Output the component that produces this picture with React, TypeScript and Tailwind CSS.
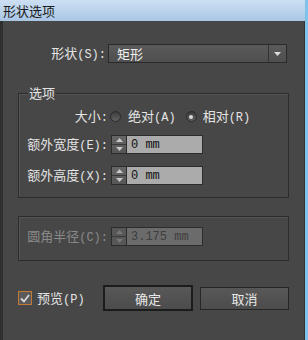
import React from 'react';

// Splits a label so CJK glyphs use the CJK font and ASCII uses a narrow mono (SimSun-like half width)
function T({ s }: { s: string }) {
  const parts = s.split(/([\x20-\x7e]+)/).filter(Boolean);
  return (
    <>
      {parts.map((p, i) =>
        /^[\x20-\x7e]+$/.test(p) ? (
          <span key={i} className="font-['Liberation_Mono',monospace] text-[12px]">
            {p}
          </span>
        ) : (
          <span key={i}>{p}</span>
        )
      )}
    </>
  );
}

function Spinner({ disabled }: { disabled?: boolean }) {
  const arrow = disabled ? '#777' : '#c8c8c8';
  return (
    <div
      className={`flex h-full w-[15px] flex-col border-r border-[#2c2c2c] ${
        disabled ? 'bg-[#575757]' : 'bg-gradient-to-b from-[#666] to-[#565656]'
      }`}
    >
      <div className="flex flex-1 items-center justify-center border-b border-[#3a3a3a]">
        <svg width="7" height="4" viewBox="0 0 7 4">
          <path d="M0 4 L3.5 0 L7 4 Z" fill={arrow} />
        </svg>
      </div>
      <div className="flex flex-1 items-center justify-center">
        <svg width="7" height="4" viewBox="0 0 7 4">
          <path d="M0 0 L3.5 4 L7 0 Z" fill={arrow} />
        </svg>
      </div>
    </div>
  );
}

function NumField({ value, disabled }: { value: string; disabled?: boolean }) {
  return (
    <div className="ml-[3px] flex h-[19px] w-[92px] border border-[#2c2c2c]">
      <Spinner disabled={disabled} />
      <div
        className={`flex flex-1 items-center pl-[4px] font-['Liberation_Mono',monospace] text-[12px] ${
          disabled ? 'bg-[#6b6b6b] text-[#3e3e3e]' : 'bg-[#ababab] text-[#111]'
        }`}
      >
        {value}
      </div>
    </div>
  );
}

function Radio({ checked }: { checked?: boolean }) {
  return (
    <div className="flex h-[11px] w-[11px] items-center justify-center rounded-full border border-[#2a2a2a] bg-gradient-to-b from-[#3c3c3c] to-[#626262]">
      {checked && <div className="h-[4px] w-[4px] rounded-full bg-[#d8d8d8]" />}
    </div>
  );
}

export default function App() {
  return (
    <div className="flex h-[340px] w-[308px] font-['Noto_Sans_CJK_SC',sans-serif] text-[13px] leading-none text-[#e4e4e4]">
      <div className="flex flex-1 flex-col">
        {/* Title bar */}
        <div className="flex h-[21px] items-center bg-gradient-to-b from-[#cde0f3] to-[#a9c6e5] pl-[3px] text-[13px] text-[#1b1b1b]">
          形状选项
        </div>

        {/* Body */}
        <div className="flex flex-1 flex-col border-l-[3px] border-r border-l-[#2f2f2f] border-r-[#333] bg-[#474747]">
          {/* Shape select */}
          <div className="mt-[23px] flex items-center">
            <div className="w-[105px] pr-[2px] text-right">
              <T s="形状(S):" />
            </div>
            <div className="flex h-[19px] w-[179px] items-center border border-[#2a2a2a] bg-gradient-to-b from-[#5a5a5a] to-[#4f4f4f]">
              <span className="flex-1 pl-[8px] text-[#efefef]">矩形</span>
              <div className="flex h-full w-[18px] items-center justify-center border-l border-[#333]">
                <svg width="7" height="4" viewBox="0 0 7 4">
                  <path d="M0 0 L7 0 L3.5 4 Z" fill="#dcdcdc" />
                </svg>
              </div>
            </div>
          </div>

          {/* Options group */}
          <div className="relative mx-[15px] mt-[30px] border border-[#2c2c2c] pb-[12px] pt-[13px] shadow-[inset_1px_1px_0_#555]">
            <div className="absolute left-[9px] top-[-8px] bg-[#474747] px-[1px]">选项</div>

            <div className="flex h-[19px] items-center">
              <div className="w-[89px] text-right">
                <T s="大小:" />
              </div>
              <div className="ml-[2px]">
                <Radio />
              </div>
              <span className="ml-[7px]">
                <T s="绝对(A)" />
              </span>
              <div className="ml-[10px]">
                <Radio checked />
              </div>
              <span className="ml-[6px]">
                <T s="相对(R)" />
              </span>
            </div>

            <div className="mt-[9px] flex items-center">
              <div className="w-[89px] text-right">
                <T s="额外宽度(E):" />
              </div>
              <NumField value="0 mm" />
            </div>

            <div className="mt-[12px] flex items-center">
              <div className="w-[89px] text-right">
                <T s="额外高度(X):" />
              </div>
              <NumField value="0 mm" />
            </div>
          </div>

          {/* Corner radius group (disabled) */}
          <div className="mx-[15px] mt-[18px] border border-[#2c2c2c] pb-[14px] pt-[10px] shadow-[inset_1px_1px_0_#555]">
            <div className="flex items-center text-[#8a8a8a]">
              <div className="w-[89px] text-right">
                <T s="圆角半径(C):" />
              </div>
              <NumField value="3.175 mm" disabled />
            </div>
          </div>

          {/* Footer */}
          <div className="mt-[24px] flex items-center pl-[15px]">
            <div className="flex h-[14px] w-[14px] shrink-0 items-center justify-center border border-[#c27a34] bg-[#5a5a5a]">
              <svg width="10" height="9" viewBox="0 0 10 9">
                <path d="M1 4.5 L4 7.5 L9 1" stroke="#d9d9d9" strokeWidth="1.8" fill="none" />
              </svg>
            </div>
            <span className="ml-[5px] w-[53px]">
              <T s="预览(P)" />
            </span>
            <button className="ml-[13px] flex h-[26px] w-[90px] items-center justify-center border-2 border-[#1c1c1c] bg-gradient-to-b from-[#585858] to-[#4c4c4c] text-[#e8e8e8]">
              确定
            </button>
            <button className="ml-[7px] flex h-[23px] w-[89px] items-center justify-center border border-[#262626] bg-gradient-to-b from-[#585858] to-[#4c4c4c] text-[#e8e8e8]">
              取消
            </button>
          </div>
        </div>
      </div>
      <div className="w-[3px] bg-[#7fc3ea]" />
    </div>
  );
}
